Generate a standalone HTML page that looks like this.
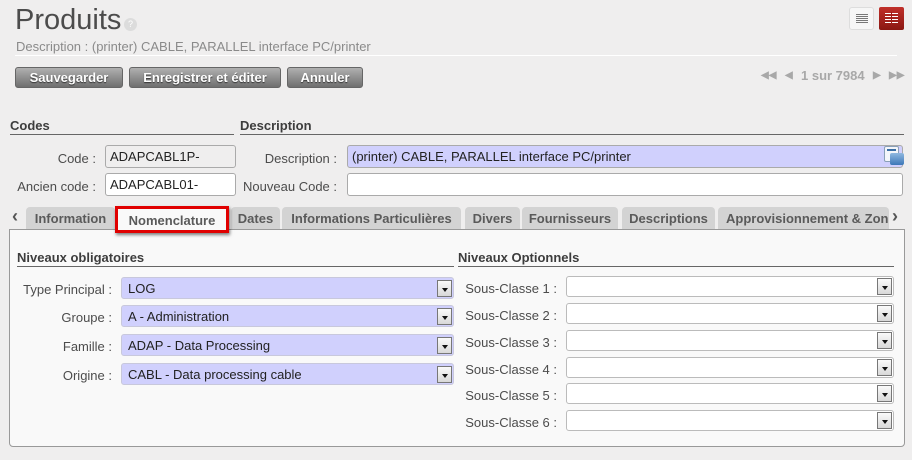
<!DOCTYPE html>
<html><head><meta charset="utf-8">
<style>
*{box-sizing:border-box;margin:0;padding:0}
body{width:912px;height:460px;background:#efeeee;font-family:"Liberation Sans",Arial,sans-serif;position:relative;overflow:hidden;color:#4c4c4c}
.a{position:absolute}
h1{position:absolute;left:15px;top:4px;font-size:29px;font-weight:normal;color:#4c4c4c}
.q{left:124px;top:18px;width:13px;height:13px;border-radius:50%;background:#dcdcdc;color:#fff;font-size:9px;text-align:center;line-height:13px}
.sub{left:16px;top:39px;font-size:13px;color:#8a8a8a}
.hr{left:15px;top:55px;width:882px;height:1px;background:#dddddd;border-bottom:1px solid #fff}
.btn{top:67px;height:21px;border:1px solid #666;border-radius:3px;background:linear-gradient(#b0b0b0,#6f6f6f);color:#fff;font-weight:bold;font-size:13px;text-align:center;line-height:19px;text-shadow:0 1px 1px #333}
.pager{top:68px;font-size:13px;font-weight:bold;color:#a8a8a8;white-space:nowrap}
.sec{font-size:13px;font-weight:bold;color:#3d3d3d;border-bottom:1px solid #666;height:17px}
.lbl{font-size:13px;color:#4c4c4c;text-align:right;white-space:nowrap}
.inp{height:23px;border:1px solid #aaa;border-radius:3px;background:#fff;font-size:13px;color:#222;padding:3px 4px;line-height:15px}
.tab{top:207px;height:22px;background:#d3d3d3;border-radius:4px 4px 0 0;font-size:13px;font-weight:bold;color:#5a5a5a;text-align:center;line-height:24px}
.panel{left:9px;top:229px;width:896px;height:218px;background:#f9f9f9;border:1px solid #999;border-radius:0 0 4px 4px}
.sel{height:22px;border:1px solid #c8c8dc;border-radius:3px;background:#d0d0fd;font-size:13px;color:#222;padding:3px 6px;line-height:15px}
.sel.w{background:#fff;border-color:#bbb;height:21px}
.arr{position:absolute;right:1px;top:2px;width:15px;height:17px;border:1px solid #777;background:linear-gradient(#fafafa,#d8d8d8)}
.arr:after{content:"";position:absolute;left:4px;top:7px;border-left:3px solid transparent;border-right:3px solid transparent;border-top:4px solid #111}
</style></head><body>
<h1>Produits</h1>
<div class="a q">?</div>
<div class="a sub">Description : (printer) CABLE, PARALLEL interface PC/printer</div>
<div class="a hr"></div>
<div class="a" style="left:849px;top:7px;width:25px;height:23px;border:1px solid #ddd;border-radius:3px;background:#f6f6f6">
 <div class="a" style="left:6px;top:6px;width:12px;height:9px;background:repeating-linear-gradient(#777 0 1px,transparent 1px 2px)"></div></div>
<div class="a" style="left:879px;top:7px;width:25px;height:23px;border-radius:2px;background:linear-gradient(#c0302a,#8a1712)">
 <div class="a" style="left:6px;top:6px;width:13px;height:10px;background:repeating-linear-gradient(#fff 0 1px,transparent 1px 3px)"></div><div class="a" style="left:12px;top:5px;width:1px;height:12px;background:#a01d17"></div></div>

<div class="a btn" style="left:15px;width:108px">Sauvegarder</div>
<div class="a btn" style="left:129px;width:152px">Enregistrer et éditer</div>
<div class="a btn" style="left:287px;width:76px">Annuler</div>
<div class="a pager" style="left:761px;font-size:10px;top:70px">◀◀</div>
<div class="a pager" style="left:785px;font-size:10px;top:70px">◀</div>
<div class="a pager" style="left:801px">1 sur 7984</div>
<div class="a pager" style="left:873px;font-size:10px;top:70px">▶</div>
<div class="a pager" style="left:889px;font-size:10px;top:70px">▶▶</div>

<div class="a sec" style="left:10px;top:118px;width:224px">Codes</div>
<div class="a sec" style="left:240px;top:118px;width:664px">Description</div>
<div class="a lbl" style="left:10px;top:151px;width:86px">Code :</div>
<div class="a inp" style="left:105px;top:145px;width:131px;background:#efeeee">ADAPCABL1P-</div>
<div class="a lbl" style="left:10px;top:179px;width:86px">Ancien code :</div>
<div class="a inp" style="left:105px;top:173px;width:131px">ADAPCABL01-</div>
<div class="a lbl" style="left:240px;top:151px;width:97px">Description :</div>
<div class="a inp" style="left:347px;top:145px;width:556px;background:#d0d0fd">(printer) CABLE, PARALLEL interface PC/printer</div>
<div class="a" style="left:884px;top:146px;width:15px;height:16px;border:1px solid #8aa0b8;border-radius:2px;background:#f4f6fa"><div class="a" style="left:2px;top:2px;width:9px;height:2px;background:#3a6ea5"></div></div>
<div class="a" style="left:890px;top:153px;width:14px;height:12px;border-radius:2px;background:linear-gradient(#8fb8e0,#3d78b8)"></div>
<div class="a lbl" style="left:240px;top:179px;width:97px">Nouveau Code :</div>
<div class="a inp" style="left:347px;top:173px;width:556px"></div>

<div class="a" style="left:12px;top:206px;font-size:18px;font-weight:bold;color:#555">‹</div>
<div class="a tab" style="left:26px;width:89px">Information</div>
<div class="a tab" style="left:231px;width:49px">Dates</div>
<div class="a tab" style="left:282px;width:179px">Informations Particulières</div>
<div class="a tab" style="left:465px;width:55px">Divers</div>
<div class="a tab" style="left:522px;width:96px">Fournisseurs</div>
<div class="a tab" style="left:622px;width:93px">Descriptions</div>
<div class="a tab" style="left:718px;width:171px;overflow:hidden;white-space:nowrap;text-align:left;padding-left:8px">Approvisionnement &amp; Zon</div>
<div class="a" style="left:892px;top:206px;font-size:18px;font-weight:bold;color:#555">›</div>

<div class="a panel"></div>
<div class="a" style="left:115px;top:206px;width:114px;height:27px;border:3px solid #e00000;background:#f9f9f9;box-shadow:1px 2px 3px rgba(0,0,0,.5);font-size:13px;font-weight:bold;color:#5a5a5a;text-align:center;line-height:24px">Nomenclature</div>

<div class="a sec" style="left:17px;top:250px;width:437px">Niveaux obligatoires</div>
<div class="a sec" style="left:458px;top:250px;width:436px">Niveaux Optionnels</div>

<div class="a lbl" style="left:12px;top:282px;width:100px">Type Principal :</div>
<div class="a sel" style="left:121px;top:277px;width:333px">LOG<div class="arr"></div></div>
<div class="a lbl" style="left:12px;top:310px;width:100px">Groupe :</div>
<div class="a sel" style="left:121px;top:305px;width:333px">A - Administration<div class="arr"></div></div>
<div class="a lbl" style="left:12px;top:339px;width:100px">Famille :</div>
<div class="a sel" style="left:121px;top:334px;width:333px">ADAP - Data Processing<div class="arr"></div></div>
<div class="a lbl" style="left:12px;top:368px;width:100px">Origine :</div>
<div class="a sel" style="left:121px;top:363px;width:333px">CABL - Data processing cable<div class="arr"></div></div>

<div class="a lbl" style="left:458px;top:281px;width:99px">Sous-Classe 1 :</div>
<div class="a sel w" style="left:566px;top:276px;width:328px"><div class="arr" style="top:1px"></div></div>
<div class="a lbl" style="left:458px;top:308px;width:99px">Sous-Classe 2 :</div>
<div class="a sel w" style="left:566px;top:303px;width:328px"><div class="arr" style="top:1px"></div></div>
<div class="a lbl" style="left:458px;top:335px;width:99px">Sous-Classe 3 :</div>
<div class="a sel w" style="left:566px;top:330px;width:328px"><div class="arr" style="top:1px"></div></div>
<div class="a lbl" style="left:458px;top:362px;width:99px">Sous-Classe 4 :</div>
<div class="a sel w" style="left:566px;top:357px;width:328px"><div class="arr" style="top:1px"></div></div>
<div class="a lbl" style="left:458px;top:388px;width:99px">Sous-Classe 5 :</div>
<div class="a sel w" style="left:566px;top:383px;width:328px"><div class="arr" style="top:1px"></div></div>
<div class="a lbl" style="left:458px;top:415px;width:99px">Sous-Classe 6 :</div>
<div class="a sel w" style="left:566px;top:410px;width:328px"><div class="arr" style="top:1px"></div></div>
</body></html>
